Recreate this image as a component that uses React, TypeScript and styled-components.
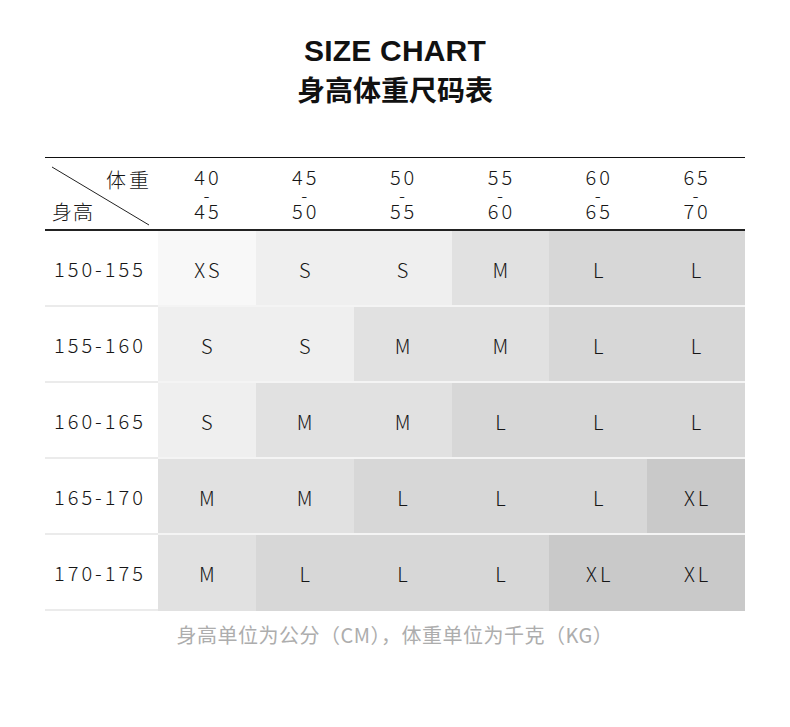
import React from "react";
import styled, { createGlobalStyle } from "styled-components";

const GlobalStyle = createGlobalStyle`
  html, body { margin: 0; padding: 0; background: #ffffff; }
  body { font-family: "Noto Sans CJK SC", "Noto Sans", sans-serif; }
`;

const Page = styled.div`
  width: 790px;
  height: 727px;
  display: flex;
  flex-direction: column;
  align-items: center;
  padding-top: 33px;
  box-sizing: border-box;
`;

const TitleEn = styled.h1`
  margin: 0;
  font-family: "Liberation Sans", Arial, sans-serif;
  font-weight: 700;
  font-size: 30px;
  letter-spacing: 0.2px;
  line-height: 36px;
  color: #111;
`;

const TitleCn = styled.h2`
  margin: 2px 0 0;
  font-family: "Noto Sans CJK SC", sans-serif;
  font-weight: 700;
  font-size: 28px;
  line-height: 36px;
  color: #111;
`;

const Table = styled.div`
  margin-top: 50px;
  width: 700px;
  display: grid;
  grid-template-columns: 113px repeat(6, 1fr);
  font-family: "Noto Sans CJK SC", sans-serif;
  font-weight: 300;
  font-size: 20px;
  letter-spacing: 3px;
  color: #161616;
`;

const HeaderCell = styled.div`
  height: 74px;
  box-sizing: border-box;
  border-top: 1px solid #111;
  border-bottom: 2px solid #222;
  display: flex;
  flex-direction: column;
  align-items: center;
  justify-content: center;
  padding-top: 1px;
  padding-left: 2px;
`;

const WeightNum = styled.span`
  line-height: 18px;
  height: 18px;
`;

const WeightDash = styled.span`
  font-size: 18px;
  line-height: 16px;
  height: 16px;
`;

const CornerCell = styled.div`
  position: relative;
  height: 74px;
  box-sizing: border-box;
  border-top: 1px solid #111;
  border-bottom: 2px solid #222;
  letter-spacing: 3px;
`;

const CornerTop = styled.span`
  position: absolute;
  right: 6px;
  top: 10px;
  line-height: 24px;
`;

const CornerBottom = styled.span`
  position: absolute;
  left: 7px;
  top: 42px;
  line-height: 24px;
  letter-spacing: 1px;
`;

const Diagonal = styled.svg`
  position: absolute;
  left: 0;
  top: 0;
  width: 113px;
  height: 72px;
  pointer-events: none;
`;

const LabelCell = styled.div`
  height: 76px;
  box-sizing: border-box;
  border-bottom: 2px solid #ebebeb;
  display: flex;
  align-items: center;
  padding-left: 9px;
`;

const SizeCell = styled.div<{ $bg: string; $last?: boolean }>`
  height: 76px;
  box-sizing: border-box;
  background: ${(p) => p.$bg};
  border-bottom: 2px solid ${(p) => (p.$last ? "transparent" : "#f4f4f4")};
  display: flex;
  align-items: center;
  justify-content: center;
  padding-top: 2px;
  padding-left: 3px;
`;

const Footer = styled.p`
  margin: 12px 0 0;
  font-family: "Noto Sans CJK SC", sans-serif;
  font-weight: 400;
  font-size: 20px;
  letter-spacing: 0.5px;
  line-height: 24px;
  color: #adadad;
`;

const shades: Record<string, string> = {
  XS: "#f8f8f8",
  S: "#efefef",
  M: "#e1e1e1",
  L: "#d7d7d7",
  XL: "#c9c9c9",
};

const weights: [string, string][] = [
  ["40", "45"],
  ["45", "50"],
  ["50", "55"],
  ["55", "60"],
  ["60", "65"],
  ["65", "70"],
];

const rows: { h: string; sizes: string[] }[] = [
  { h: "150-155", sizes: ["XS", "S", "S", "M", "L", "L"] },
  { h: "155-160", sizes: ["S", "S", "M", "M", "L", "L"] },
  { h: "160-165", sizes: ["S", "M", "M", "L", "L", "L"] },
  { h: "165-170", sizes: ["M", "M", "L", "L", "L", "XL"] },
  { h: "170-175", sizes: ["M", "L", "L", "L", "XL", "XL"] },
];

export default function App() {
  return (
    <Page>
      <GlobalStyle />
      <TitleEn>SIZE CHART</TitleEn>
      <TitleCn>身高体重尺码表</TitleCn>
      <Table>
        <CornerCell>
          <Diagonal viewBox="0 0 113 72">
            <line x1="7" y1="9" x2="104" y2="67" stroke="#222" strokeWidth="1" />
          </Diagonal>
          <CornerTop>体重</CornerTop>
          <CornerBottom>身高</CornerBottom>
        </CornerCell>
        {weights.map(([a, b]) => (
          <HeaderCell key={a}>
            <WeightNum>{a}</WeightNum>
            <WeightDash>-</WeightDash>
            <WeightNum>{b}</WeightNum>
          </HeaderCell>
        ))}
        {rows.map((r, ri) => (
          <React.Fragment key={r.h}>
            <LabelCell>{r.h}</LabelCell>
            {r.sizes.map((s, ci) => (
              <SizeCell key={ci} $bg={shades[s]} $last={ri === rows.length - 1}>
                {s}
              </SizeCell>
            ))}
          </React.Fragment>
        ))}
      </Table>
      <Footer>身高单位为公分（CM），体重单位为千克（KG）</Footer>
    </Page>
  );
}
